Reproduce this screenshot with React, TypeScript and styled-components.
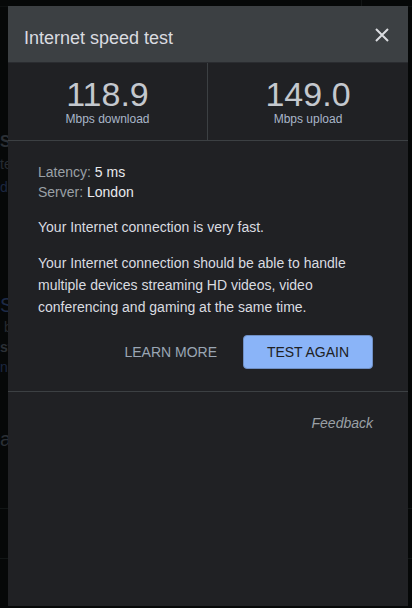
import React from "react";
import styled, { createGlobalStyle } from "styled-components";

const Global = createGlobalStyle`
  html, body { margin: 0; padding: 0; background: #060808; }
  body { font-family: "Liberation Sans", Arial, sans-serif; width: 412px; height: 608px; overflow: hidden; position: relative; }
`;

const BgPage = styled.div`
  position: relative;
  width: 412px;
  height: 608px;
  background: #060808;
  overflow: hidden;
`;

const BgTopBar = styled.div`
  height: 6px;
  border-bottom: 1px solid #0d1010;
  display: flex;
  justify-content: flex-end;
`;

const BgTopSep = styled.div`
  width: 1px;
  margin-right: 50px;
  background: #121515;
`;

const BgColumn = styled.div`
  display: flex;
  flex-direction: column;
  padding-top: 124px;
`;

const BgLine = styled.div<{ $h: number; $size?: number; $color?: string; $bold?: boolean; $rule?: boolean }>`
  height: ${(p) => p.$h}px;
  line-height: ${(p) => p.$h}px;
  font-size: ${(p) => p.$size ?? 14}px;
  font-weight: ${(p) => (p.$bold ? 700 : 400)};
  color: ${(p) => p.$color ?? "#2a2f35"};
  white-space: nowrap;
  border-bottom: ${(p) => (p.$rule ? "1px solid #121616" : "none")};
`;

const Dialog = styled.div`
  position: absolute;
  left: 8px;
  top: 6px;
  width: 400px;
  height: 600px;
  background: #202124;
  display: flex;
  flex-direction: column;
`;

const Header = styled.div`
  height: 56px;
  box-sizing: border-box;
  background: #3c4043;
  padding: 20px 18px 12px 16px;
  display: flex;
  align-items: flex-start;
  justify-content: space-between;
`;

const Title = styled.h1`
  margin: 0;
  font-size: 18px;
  line-height: 24px;
  font-weight: 400;
  color: #dadce0;
`;

const CloseButton = styled.button`
  margin-top: 1px;
  width: 16px;
  height: 16px;
  padding: 0;
  border: none;
  background: transparent;
  display: flex;
  align-items: center;
  justify-content: center;
  cursor: pointer;
`;

const Stats = styled.div`
  display: grid;
  grid-template-columns: 200px 200px;
  border-top: 1px solid #2a2c30;
  border-bottom: 1px solid #3c4043;
`;

const StatCell = styled.div<{ $divider?: boolean }>`
  display: flex;
  flex-direction: column;
  align-items: center;
  padding: 14px 0 14px;
  border-right: ${(p) => (p.$divider ? "1px solid #3c4043" : "none")};
`;

const StatValue = styled.div`
  font-size: 34px;
  line-height: 35px;
  color: #c4c8ce;
`;

const StatLabel = styled.div`
  font-size: 12px;
  line-height: 14px;
  color: #a9b6c9;
`;

const Body = styled.div`
  padding: 21px 35px 22px 30px;
  border-bottom: 1px solid #3c4043;
  display: flex;
  flex-direction: column;
`;

const Meta = styled.div`
  font-size: 14px;
  line-height: 20px;
  color: #9aa0a6;
`;

const MetaValue = styled.span`
  color: #e8eaed;
`;

const Paragraph = styled.p`
  margin: 14px 0 0;
  font-size: 14px;
  line-height: 22px;
  color: #dadce0;
`;

const Actions = styled.div`
  margin-top: 17px;
  display: flex;
  justify-content: flex-end;
  align-items: center;
  gap: 26px;
`;

const TextButton = styled.button`
  border: none;
  background: transparent;
  padding: 0;
  font-family: inherit;
  font-size: 14px;
  color: #9aa6b4;
  cursor: pointer;
`;

const PrimaryButton = styled.button`
  width: 130px;
  height: 34px;
  border: 1px solid #6f8fc4;
  border-radius: 4px;
  background: #8ab4f8;
  font-family: inherit;
  font-size: 14px;
  color: #202124;
  cursor: pointer;
`;

const Footer = styled.div`
  padding: 21px 35px 0 30px;
  display: flex;
  justify-content: flex-end;
`;

const FeedbackLink = styled.a`
  font-size: 14px;
  line-height: 20px;
  font-style: italic;
  color: #9aa0a6;
  text-decoration: none;
  cursor: pointer;
`;

export default function App() {
  return (
    <>
      <Global />
      <BgPage>
        <BgTopBar>
          <BgTopSep />
        </BgTopBar>
        <BgColumn>
          <BgLine $h={22} $bold $size={16} $color="#2b3036">Sp</BgLine>
          <BgLine $h={22} $color="#262b31">te</BgLine>
          <BgLine $h={24} $color="#1c2740">d</BgLine>
          <BgLine $h={94} />
          <BgLine $h={24} $size={20} $color="#1e2b47">S</BgLine>
          <BgLine $h={20} $color="#262b31">&nbsp;b</BgLine>
          <BgLine $h={20} $bold $color="#2b3036">st</BgLine>
          <BgLine $h={20} $color="#1c2740">ne</BgLine>
          <BgLine $h={42} />
          <BgLine $h={40} $size={20} $color="#2b3036">ar</BgLine>
          <BgLine $h={49} $rule />
          <BgLine $h={49} $rule />
          <BgLine $h={49} $rule />
        </BgColumn>
        <Dialog>
          <Header>
            <Title>Internet speed test</Title>
            <CloseButton aria-label="Close">
              <svg width="14" height="14" viewBox="0 0 14 14">
                <path d="M1 1 L13 13 M13 1 L1 13" stroke="#dadce0" strokeWidth="2" />
              </svg>
            </CloseButton>
          </Header>
          <Stats>
            <StatCell $divider>
              <StatValue>118.9</StatValue>
              <StatLabel>Mbps download</StatLabel>
            </StatCell>
            <StatCell>
              <StatValue>149.0</StatValue>
              <StatLabel>Mbps upload</StatLabel>
            </StatCell>
          </Stats>
          <Body>
            <Meta>
              Latency: <MetaValue>5 ms</MetaValue>
            </Meta>
            <Meta>
              Server: <MetaValue>London</MetaValue>
            </Meta>
            <Paragraph>Your Internet connection is very fast.</Paragraph>
            <Paragraph>
              Your Internet connection should be able to handle multiple devices streaming HD videos, video
              conferencing and gaming at the same time.
            </Paragraph>
            <Actions>
              <TextButton>LEARN MORE</TextButton>
              <PrimaryButton>TEST AGAIN</PrimaryButton>
            </Actions>
          </Body>
          <Footer>
            <FeedbackLink>Feedback</FeedbackLink>
          </Footer>
        </Dialog>
      </BgPage>
    </>
  );
}
